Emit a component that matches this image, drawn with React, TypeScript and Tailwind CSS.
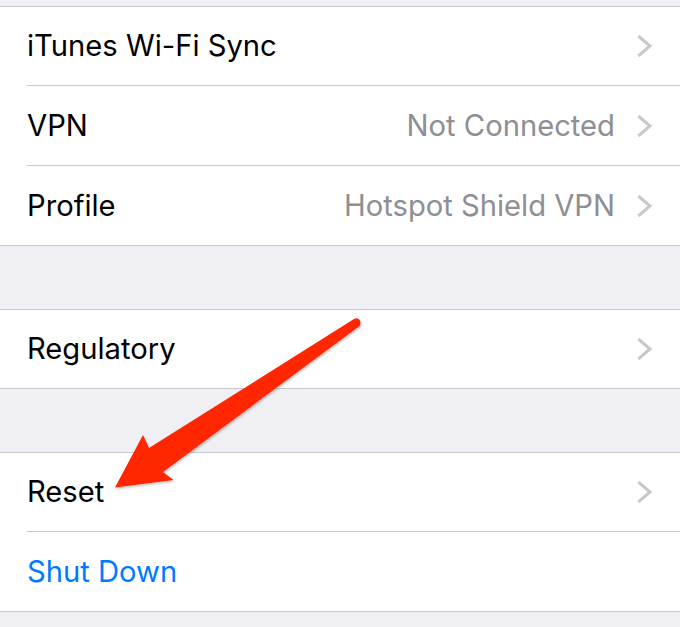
import React from "react";

const Chevron = () => (
  <svg width="16" height="22" viewBox="0 0 16 22" className="shrink-0">
    <path d="M2.5 2 L13 11 L2.5 20" fill="none" stroke="#c7c7cc" strokeWidth="3" strokeLinecap="square" strokeLinejoin="miter" />
  </svg>
);

const Row = ({ label, value, chevron = true, blue = false, h = "h-[79px]" }: { label: string; value?: string; chevron?: boolean; blue?: boolean; h?: string }) => (
  <div className={`flex items-center ${h} bg-white pl-[27px] pr-[27px]`}>
    <span className={`flex-1 text-[29.2px] ${blue ? "text-[#007aff]" : "text-black"}`}>{label}</span>
    {value && <span className="text-[29.2px] text-[#8e8e93] mr-[22px]">{value}</span>}
    {chevron && <Chevron />}
  </div>
);

const Sep = () => (
  <div className="bg-white">
    <div className="ml-[27px] h-px bg-[#c8c7cc]" />
  </div>
);

const Border = () => <div className="h-px bg-[#c8c7cc]" />;

export default function App() {
  return (
    <div className="relative w-[680px] h-[627px] overflow-hidden bg-[#efeff4]" style={{ fontFamily: "Inter, 'Noto Sans', sans-serif" }}>
      <div className="flex flex-col">
        <div className="h-[6px]" />
        <Border />
        <Row label="iTunes Wi-Fi Sync" h="h-[78px]" />
        <Sep />
        <Row label="VPN" value="Not Connected" />
        <Sep />
        <Row label="Profile" value="Hotspot Shield VPN" />
        <Border />
        <div className="h-[63px]" />
        <Border />
        <Row label="Regulatory" h="h-[78px]" />
        <Border />
        <div className="h-[63px]" />
        <Border />
        <Row label="Reset" h="h-[78px]" />
        <Sep />
        <Row label="Shut Down" chevron={false} blue />
        <Border />
      </div>
      <svg className="absolute inset-0 pointer-events-none" width="680" height="627" viewBox="0 0 680 627">
        <defs>
          <filter id="sh" x="-10%" y="-10%" width="120%" height="120%">
            <feDropShadow dx="1" dy="1.5" stdDeviation="1.2" floodColor="#000" floodOpacity="0.25" />
          </filter>
        </defs>
        <path
          d="M354 319 L149 448 L143 435 L115 487.5 L173.5 480 L163 472 L359.5 326 Q362 321 358 318.5 Q356 318 354 319 Z"
          fill="#ff2600"
          filter="url(#sh)"
        />
      </svg>
    </div>
  );
}
